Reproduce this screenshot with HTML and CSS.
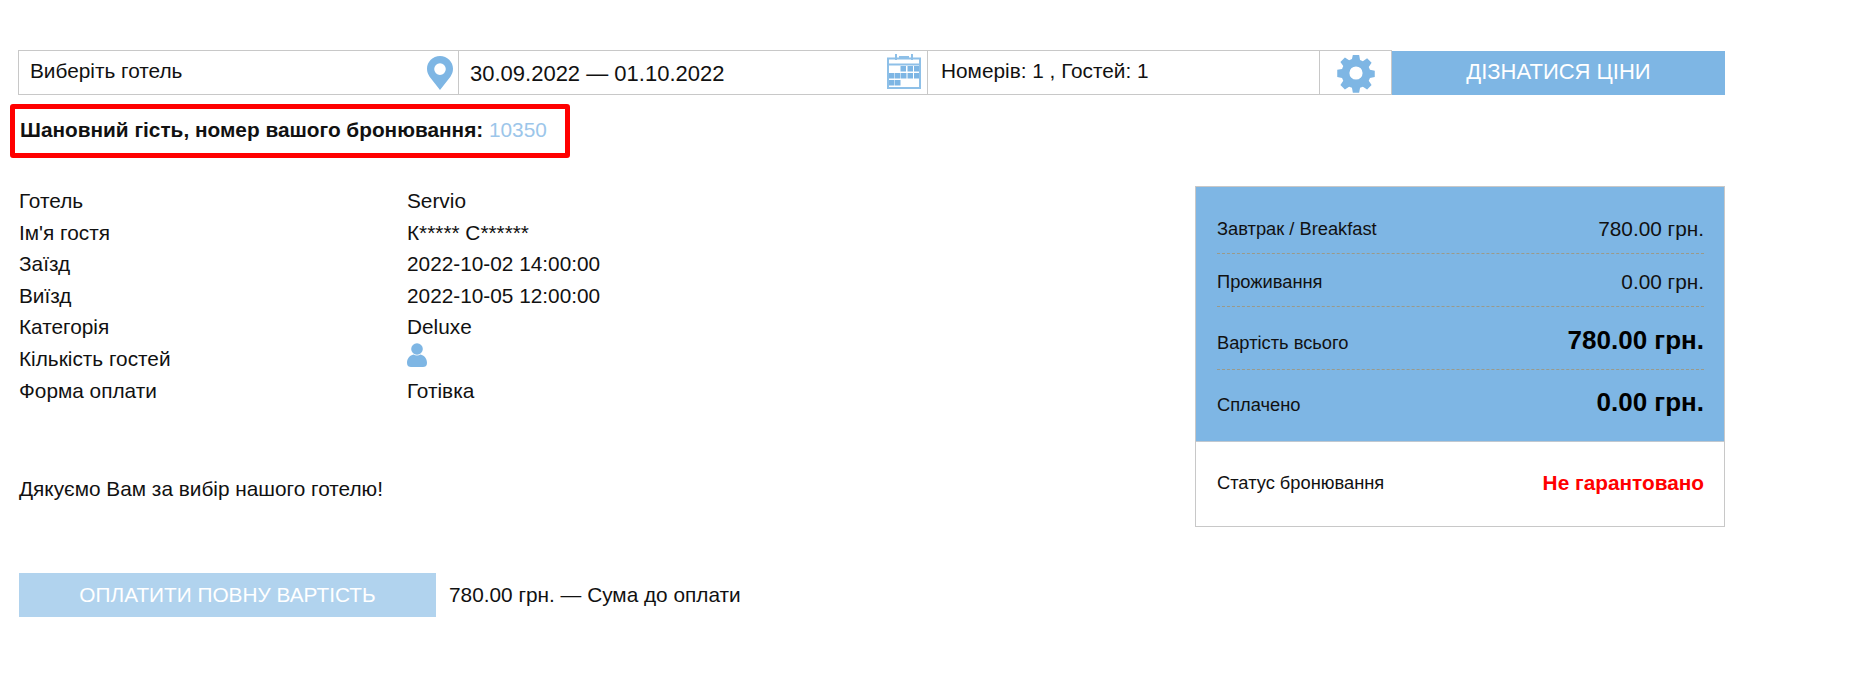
FILE: index.html
```html
<!DOCTYPE html>
<html lang="uk">
<head>
<meta charset="utf-8">
<title>Бронювання</title>
<link rel="stylesheet" href="styles.css">
</head>
<body>
<div class="page">
  <div class="search">
    <div class="cell cell-hotel">
      <span class="hotel-label">Виберіть готель</span>
      <svg class="ic-pin" viewBox="0 0 26 34"><path fill-rule="evenodd" d="M13 0C5.800 0 0 5.700 0 12.800c0 3 1 5.400 2.600 8L13 34l10.400-13.200C25 18.200 26 15.800 26 12.800 26 5.700 20.200 0 13 0zm0 7.300a5.800 5.800 0 1 1 0 11.600 5.800 5.800 0 0 1 0-11.600z"/></svg>
    </div>
    <div class="cell cell-date">
      <span class="date-label">30.09.2022 — 01.10.2022</span>
      <svg class="ic-cal" viewBox="0 0 34 36">
        <path class="cal-frame" d="M1 5.500h32v29.500H1zM1 11.500h32"/>
        <path class="cal-ring" d="M9 1v6M25 1v6M12 4h10"/>
        <path class="cal-days" d="M13.500 13h5.500v5.500h-5.500zM20.500 13h5.500v5.500h-5.500zM27 13h5v5.500h-5zM2 20h5.500v5.500H2zM8 20h5.500v5.500H8zM14 20h5.500v5.500H14zM20.500 20h5.500v5.500h-5.500zM27 20h5v5.500h-5zM2 27h5.500v5.500H2zM8 27h5.500v5.500H8z"/>
      </svg>
    </div>
    <div class="cell cell-rooms">Номерів: 1 , Гостей: 1</div>
    <div class="cell cell-gear">
      <svg class="ic-gear" viewBox="0 0 24 24"><path fill-rule="evenodd" d="M9.900 0h4.200l.6 3.300 1.900.8 2.800-1.900 3 3-1.900 2.800.8 1.900 3.200.6v4.200l-3.200.6-.8 1.900 1.900 2.800-3 3-2.800-1.900-1.900.8-.6 3.300H9.900l-.6-3.300-1.900-.8-2.800 1.900-3-3 1.900-2.800-.8-1.900-3.200-.6V9.900l3.200-.6.800-1.900-1.900-2.800 3-3 2.800 1.900 1.900-.8zM12 7.600a4.400 4.400 0 1 0 0 8.800 4.400 4.400 0 0 0 0-8.800z"/></svg>
    </div>
    <button class="find" type="button">ДІЗНАТИСЯ ЦІНИ</button>
  </div>

  <div class="notice"><b>Шановний гість, номер вашого бронювання:</b> <span class="notice-num">10350</span></div>

  <div class="main">
    <div class="details">
      <dl class="facts">
        <dt>Готель</dt><dd>Servio</dd>
        <dt>Ім'я гостя</dt><dd>К***** С******</dd>
        <dt>Заїзд</dt><dd>2022-10-02 14:00:00</dd>
        <dt>Виїзд</dt><dd>2022-10-05 12:00:00</dd>
        <dt>Категорія</dt><dd>Deluxe</dd>
        <dt>Кількість гостей</dt>
        <dd><svg class="ic-guest" viewBox="0 0 20 24"><circle cx="10" cy="6" r="5.800"/><path d="M0 20c0-5 3-7.500 6.500-8.500 2 1.300 5 1.300 7 0C17 12.500 20 15 20 20c0 3-2 4-4 4H4c-2 0-4-1-4-4z"/></svg></dd>
        <dt>Форма оплати</dt><dd>Готівка</dd>
      </dl>
      <p class="thanks">Дякуємо Вам за вибір нашого готелю!</p>
    </div>
    <aside class="summary">
      <div class="sum-blue">
        <div class="sum-row"><span>Завтрак / Breakfast</span><span class="amt">780.00 грн.</span></div>
        <div class="sum-row"><span>Проживання</span><span class="amt">0.00 грн.</span></div>
        <div class="sum-row sum-big"><span>Вартість всього</span><span class="amt">780.00 грн.</span></div>
        <div class="sum-row sum-big sum-paid"><span>Сплачено</span><span class="amt">0.00 грн.</span></div>
      </div>
      <div class="sum-status"><span class="status-key">Статус бронювання</span><span class="status-val">Не гарантовано</span></div>
    </aside>
  </div>

  <div class="pay">
    <button class="pay-btn" type="button">ОПЛАТИТИ ПОВНУ ВАРТІСТЬ</button>
    <span class="pay-sum">780.00 грн. — Сума до оплати</span>
  </div>
</div>
</body>
</html>
```
FILE: styles.css
```css
* { box-sizing: border-box; }
html, body { margin: 0; padding: 0; background: #fff; }
body { font-family: "Liberation Sans", Arial, sans-serif; color: #111; font-size: 20.800px; }
.page { width: 1854px; height: 685px; padding: 50px 129px 0 18px; overflow: hidden; }

.search { display: flex; height: 45px; width: 1707px; }
.cell { border: 1px solid #c8c8c8; border-left: 0; display: flex; align-items: center; background: #fff; }
.cell-hotel { width: 441px; border-left: 1px solid #c8c8c8; padding: 0 5px 0 11px; justify-content: space-between; }
.hotel-label { padding-bottom: 3px; }
.cell-date { width: 469px; padding: 0 6px 0 11px; justify-content: space-between; font-size: 22px; }
.date-label { padding-top: 2px; }
.cell-rooms { width: 392px; padding: 0 0 3px 13px; }
.cell-gear { width: 72px; justify-content: center; }
.find { width: 333px; height: 44px; margin-top: 1px; border: 0; background: #7eb6e4; color: #fff; font: 22px "Liberation Sans", Arial, sans-serif; padding: 0 0 3px; }
.ic-pin { width: 26px; height: 34px; fill: #7eb6e4; }
.ic-cal { width: 34px; height: 36px; margin-bottom: 4px; }
.cal-frame { fill: none; stroke: #8ec0e8; stroke-width: 2; }
.cal-ring { fill: none; stroke: #8ec0e8; stroke-width: 2; }
.cal-days { fill: #7eb6e4; }
.ic-gear { width: 36px; height: 36px; fill: #7eb6e4; overflow: visible; }

.notice { width: 560px; height: 54px; margin: 9px 0 0 -8px; border: 5px solid #f00; border-radius: 3px; padding: 0 0 2px 5px; line-height: 41px; white-space: nowrap; }
.notice-num { color: #9cc6ea; }

.main { display: flex; justify-content: space-between; width: 1707px; margin-top: 28px; }
.details { padding-left: 1px; }
.facts { display: grid; grid-template-columns: 388px auto; grid-auto-rows: 31.600px; margin: -1px 0 0; line-height: 31px; }
.facts dt, .facts dd { margin: 0; font-weight: 400; }
.ic-guest { width: 20px; height: 24px; fill: #7eb6e4; display: block; }
.thanks { margin: 70.600px 0 0; line-height: 24px; }

.summary { width: 530px; height: 341px; border: 1px solid #c8c8c8; }
.sum-blue { background: #7eb6e4; height: 255px; padding: 14px 20px 0 21px; border-bottom: 1px solid #c0c8d0; }
.sum-row { display: flex; justify-content: space-between; align-items: center; border-bottom: 1px dashed #9a9a8a; height: 53px; padding-top: 3px; font-size: 18.300px; }
.sum-row .amt { font-size: 20.800px; }
.sum-big { height: 63px; align-items: baseline; padding-top: 18px; }
.sum-paid { padding-top: 17px; }
.sum-big .amt { font-size: 26px; font-weight: 700; color: #000; }
.sum-row:last-child { border-bottom: 0; }
.sum-status { height: 84px; padding: 0 20px 2px 21px; display: flex; justify-content: space-between; align-items: center; }
.status-key { font-size: 18.300px; }
.status-val { color: #f00; font-weight: 700; }

.pay { display: flex; align-items: center; gap: 13px; margin-top: 46px; margin-left: 1px; }
.pay-btn { width: 417px; height: 44px; border: 0; background: #b1d3ee; color: #fff; font: 20.800px "Liberation Sans", Arial, sans-serif; padding: 0; }
.pay-sum { font-size: 20.800px; }
```
